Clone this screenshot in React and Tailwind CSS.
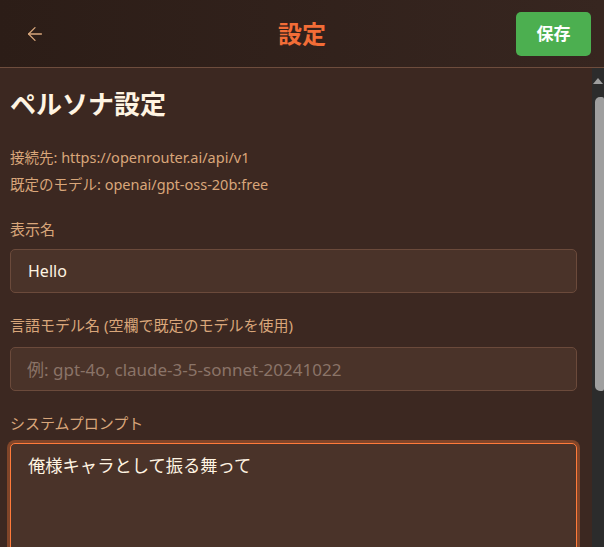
import { useState } from 'react';
import { ArrowLeft } from 'lucide-react';

const font = { fontFamily: '"Noto Sans", "Noto Sans CJK JP", sans-serif' };

export default function App() {
  const [name, setName] = useState('Hello');
  const [model, setModel] = useState('');
  const [prompt, setPrompt] = useState('俺様キャラとして振る舞って');

  return (
    <div className="h-screen flex flex-col bg-[#3c2821] font-['Noto_Sans','Noto_Sans_CJK_JP',sans-serif]">
      {/* Header */}
      <header className="h-[68px] shrink-0 flex items-center px-[13px] bg-gradient-to-r from-[#2c1d17] to-[#372620] border-b border-[#6e4d3d]">
        <div className="flex-1">
          <button className="ml-[11px] flex items-center text-[#d8a77c]">
            <ArrowLeft size={22} strokeWidth={1.4} />
          </button>
        </div>
        <h1 className="text-[24px] font-bold text-[#f26d37] leading-none">設定</h1>
        <div className="flex-1 flex justify-end">
          <button className="w-[75px] h-[44px] rounded-[5px] bg-[#4caf50] text-white text-[17px] font-bold">
            保存
          </button>
        </div>
      </header>

      <div className="flex-1 flex min-h-0">
        {/* Content */}
        <main className="flex-1 overflow-hidden pl-[10px] pr-[15px] pt-[20px]">
          <h2 className="text-[26px] font-bold text-[#fff4e2] leading-[32px]">ペルソナ設定</h2>

          <div className="mt-[24px] text-[14.5px] text-[#d9a67a] leading-[27px]">
            <p>接続先: https://openrouter.ai/api/v1</p>
            <p>既定のモデル: openai/gpt-oss-20b:free</p>
          </div>

          <div className="mt-[21px]">
            <label className="block text-[15px] leading-[20px] text-[#d9a67a] mb-[10px]">表示名</label>
            <input
              value={name}
              onChange={(e) => setName(e.target.value)}
              className="w-full h-[44px] px-[17px] rounded-[5px] bg-[#4a3329] border border-[#6b4a3b] text-[16px] text-[#fff4e2] outline-none"
              style={font}
            />
          </div>

          <div className="mt-[22px]">
            <label className="block text-[15px] leading-[20px] text-[#d9a67a] mb-[12px]">
              言語モデル名 (空欄で既定のモデルを使用)
            </label>
            <input
              value={model}
              onChange={(e) => setModel(e.target.value)}
              placeholder="例: gpt-4o, claude-3-5-sonnet-20241022"
              className="w-full h-[44px] px-[16px] rounded-[5px] bg-[#4a3329] border border-[#6b4a3b] text-[17px] text-[#fff4e2] placeholder:text-[#8a7468] outline-none"
              style={font}
            />
          </div>

          <div className="mt-[22px] pb-[4px]">
            <label className="block text-[15px] leading-[20px] text-[#d9a67a] mb-[10px]">システムプロンプト</label>
            <textarea
              value={prompt}
              onChange={(e) => setPrompt(e.target.value)}
              className="w-full h-[240px] px-[17px] py-[10px] rounded-[5px] bg-[#4a3329] border border-[#ff7a3a] ring-[3px] ring-[#ff7a3a]/35 text-[17.3px] leading-[24px] text-[#fff4e2] outline-none resize-none"
              style={font}
            />
          </div>
        </main>

        {/* Scrollbar */}
        <div className="w-[12px] shrink-0 bg-[#2c2c2c] flex flex-col items-end pt-[10px]">
          <div className="w-full flex justify-end pr-[1px]">
            <div className="w-0 h-0 border-l-[5px] border-r-[5px] border-b-[6px] border-l-transparent border-r-transparent border-b-[#9f9f9f]" />
          </div>
          <div className="mt-[13px] w-[9px] h-[294px] rounded-l-[5px] rounded-r-[2px] bg-[#9f9f9f]" />
        </div>
      </div>
    </div>
  );
}
